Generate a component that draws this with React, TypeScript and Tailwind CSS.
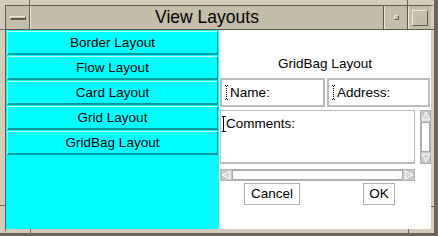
import React from "react";

const layouts = ["Border Layout", "Flow Layout", "Card Layout", "Grid Layout", "GridBag Layout"];

// I-beam text caret, dotted when the field has no focus
const Caret = ({ dotted, h }: { dotted?: boolean; h: number }) => (
  <svg width="4" height={h} viewBox={`0 0 4 ${h}`} className="shrink-0">
    <line x1="0" y1="0.5" x2="4" y2="0.5" stroke="#000" strokeDasharray={dotted ? "1 1" : undefined} />
    <line x1="0" y1={h - 0.5} x2="4" y2={h - 0.5} stroke="#000" strokeDasharray={dotted ? "1 1" : undefined} />
    <line x1="1.5" y1="1" x2="1.5" y2={h - 1} stroke="#000" strokeDasharray={dotted ? "1 1" : undefined} />
  </svg>
);

const Arrow = ({ dir }: { dir: "up" | "down" | "left" | "right" }) => {
  const pts = {
    up: "5,1 9,9 1,9",
    down: "1,1 9,1 5,9",
    left: "1,5 9,1 9,9",
    right: "1,1 9,5 1,9",
  }[dir];
  return (
    <svg width="10" height="10" viewBox="0 0 10 10" className="shrink-0">
      <polygon points={pts} fill="#d6d6d6" stroke="#ffffff" strokeWidth="1" />
    </svg>
  );
};

const Notch = ({ className }: { className: string }) => <div className={`absolute ${className}`} />;

export default function App() {
  return (
    <div className="relative w-[438px] h-[236px] bg-[#d4cdbb] border-r-4 border-b-[3px] border-[#6d675a] pl-[5px] pt-[5px] font-['Liberation_Sans',Arial,sans-serif] text-black overflow-hidden">
      {/* resize corner marks */}
      <Notch className="left-[29px] top-0 w-px h-[5px] bg-[#6d675a]" />
      <Notch className="left-0 top-[29px] w-[5px] h-px bg-[#6d675a]" />
      <Notch className="left-[407px] top-0 w-px h-[5px] bg-[#6d675a]" />
      <Notch className="left-[431px] top-[29px] w-[3px] h-px bg-[#6d675a]" />
      <Notch className="left-0 top-[205px] w-[5px] h-px bg-[#6d675a]" />
      <Notch className="left-[30px] top-[229px] w-px h-[4px] bg-[#6d675a]" />
      <Notch className="left-[408px] top-[229px] w-px h-[4px] bg-[#6d675a]" />
      <Notch className="left-[431px] top-[206px] w-[3px] h-px bg-[#6d675a]" />

      <div className="w-full h-full flex flex-col border-l border-t border-l-[#5e594d] border-t-[#5e594d] border-r-[3px] border-b-4 border-r-[#d4cdbb] border-b-[#d4cdbb]">
        {/* title bar */}
        <div className="flex h-[24px] bg-[#c4bda9] border-b border-[#5e594d]">
          <div className="w-[24px] h-full border-r border-[#5e594d] flex items-center justify-center">
            <div className="w-[16px] h-[4px] bg-[#c4bda9] border-t border-l border-[#ece8dc] border-b-2 border-r border-b-[#5e594d] border-r-[#5e594d]" />
          </div>
          <div className="flex-1 h-full border-l border-l-[#ece8dc] border-r border-r-[#5e594d] flex items-center justify-center text-[17.5px] leading-none">
            View Layouts
          </div>
          <div className="w-[24px] h-full border-l border-l-[#ece8dc] border-r border-r-[#5e594d] flex items-center justify-center">
            <div className="w-[5px] h-[5px] border-t border-l border-[#ece8dc] border-b border-r border-b-[#5e594d] border-r-[#5e594d]" />
          </div>
          <div className="w-[23px] h-full border-l border-l-[#ece8dc] flex items-center justify-center">
            <div className="w-[16px] h-[16px] border-t border-l border-[#ece8dc] border-b border-r border-b-[#5e594d] border-r-[#5e594d]" />
          </div>
        </div>

        {/* client area */}
        <div className="flex h-[199px]">
          <div className="w-[213px] h-full bg-[#00ffff] flex flex-col gap-px px-px pt-px">
            {layouts.map((name) => (
              <div
                key={name}
                className="h-[24px] flex items-center justify-center text-[13.5px] leading-none border-t border-l border-[#b8ffff] border-r border-b-2 border-r-[#009c9c] border-b-[#009c9c]"
              >
                {name}
              </div>
            ))}
          </div>

          <div className="flex-1 h-full bg-white flex flex-col text-[13.5px] leading-none">
            <div className="h-[20px] mt-[24px] flex items-center justify-center">GridBag Layout</div>

            <div className="flex h-[29px] mt-[4px] pl-px pr-px gap-[2px]">
              <div className="w-[105px] h-full border-2 border-[#bcbcbc] flex items-center pl-[3px]">
                <Caret dotted h={15} />
                <span className="ml-px">Name:</span>
              </div>
              <div className="flex-1 h-full border-2 border-[#bcbcbc] flex items-center pl-[3px]">
                <Caret dotted h={15} />
                <span className="ml-px">Address:</span>
              </div>
            </div>

            <div className="flex h-[54px] mt-[3px] pl-px gap-[5px]">
              <div className="w-[195px] h-full border border-b-2 border-[#bcbcbc] flex items-start pt-[5px] pl-px">
                <Caret h={16} />
                <span className="mt-[1px]">Comments:</span>
              </div>
              <div className="w-[11px] h-full bg-[#c6c6c6] border border-[#b0b0b0] flex flex-col items-center">
                <Arrow dir="up" />
                <div className="flex-1 w-[9px] my-[1px] bg-white border border-[#a8a8a8]" />
                <Arrow dir="down" />
              </div>
            </div>

            <div className="w-[195px] h-[12px] mt-[5px] ml-px bg-[#c6c6c6] border border-[#b0b0b0] flex items-center">
              <Arrow dir="left" />
              <div className="flex-1 h-[10px] mx-[1px] bg-white border border-[#a8a8a8]" />
              <Arrow dir="right" />
            </div>

            <div className="flex h-[22px] mt-[2px]">
              <div className="ml-[25px] w-[56px] h-full border border-[#b0b0b0] flex items-center justify-center">Cancel</div>
              <div className="ml-[63px] w-[32px] h-full border border-[#b0b0b0] flex items-center justify-center">OK</div>
            </div>
          </div>
        </div>
      </div>
    </div>
  );
}
